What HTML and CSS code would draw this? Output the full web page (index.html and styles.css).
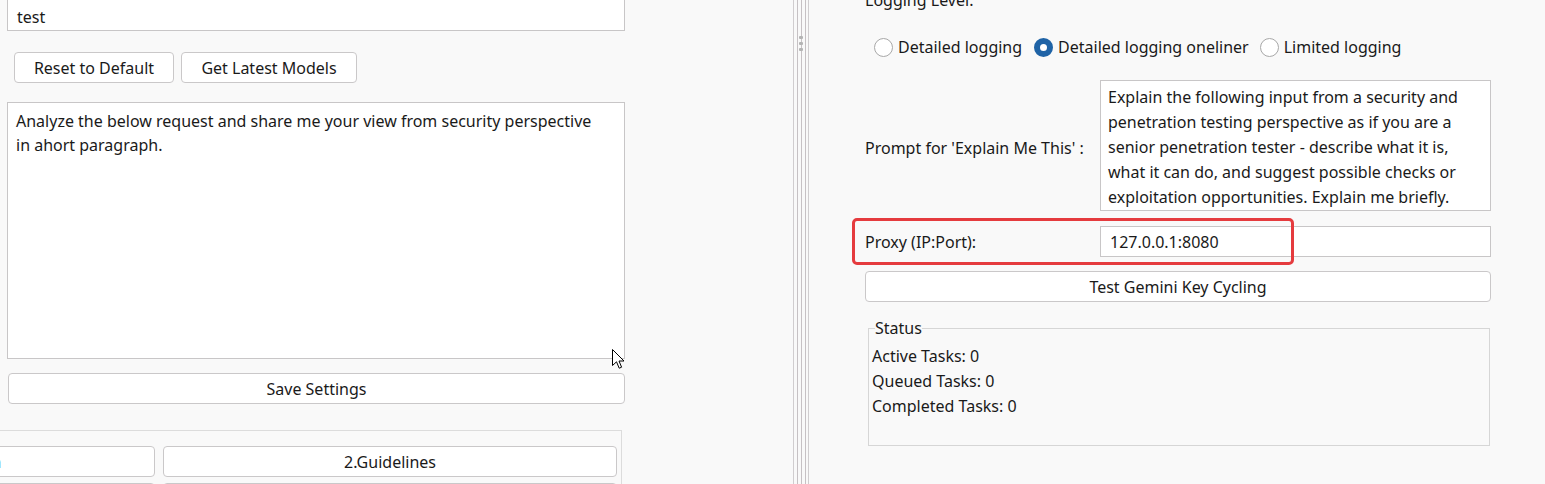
FILE: index.html
```html
<!DOCTYPE html>
<html>
<head>
<meta charset="utf-8">
<link rel="stylesheet" href="styles.css">
</head>
<body>
<div class="app">
  <div class="left">
    <div class="col">
      <div class="field field-top">test</div>
      <div class="btn-row">
        <div class="btn btn-reset">Reset to Default</div>
        <div class="btn btn-models">Get Latest Models</div>
      </div>
      <div class="field area-left">Analyze the below request and share me your view from security perspective<br>in ahort paragraph.</div>
      <div class="btn btn-save">Save Settings</div>
      <div class="group">
        <div class="btn btn-tab btn-active">1.API Configuration</div>
        <div class="btn btn-tab">2.Guidelines</div>
        <div class="btn btn-tab"></div>
        <div class="btn btn-tab"></div>
      </div>
    </div>
    <svg class="cursor" width="13" height="21" viewBox="0 0 13 21"><path d="M0.5 0.5 L0.5 16.5 L4.5 12.8 L7.2 19.2 L9.6 18.2 L7 12 L12 12 Z" fill="#fff" stroke="#000" stroke-width="1"/></svg>
  </div>
  <div class="splitter">
    <span class="sl"></span><span class="sl mid"></span><span class="sl mid"></span><span class="sl mid"></span><span class="sl"></span>
    <div class="grip"><i></i><i></i><i></i></div>
  </div>
  <div class="right">
    <div class="lbl-log">Logging Level:</div>
    <div class="radios">
      <div class="radio"><span class="dot"></span><span>Detailed logging</span></div>
      <div class="radio r2"><span class="dot on"></span><span>Detailed logging oneliner</span></div>
      <div class="radio"><span class="dot"></span><span>Limited logging</span></div>
    </div>
    <div class="form-row row-prompt">
      <div class="lbl lbl-prompt">Prompt for 'Explain Me This' :</div>
      <div class="field area-prompt">Explain the following input from a security and<br>penetration testing perspective as if you are a<br>senior penetration tester - describe what it is,<br>what it can do, and suggest possible checks or<br>exploitation opportunities. Explain me briefly.</div>
    </div>
    <div class="form-row row-proxy">
      <div class="lbl">Proxy (IP:Port):</div>
      <div class="field input-proxy">127.0.0.1:8080</div>
      <div class="hl"></div>
    </div>
    <div class="btn btn-test">Test Gemini Key Cycling</div>
    <fieldset class="status">
      <legend>Status</legend>
      <div class="st-line">Active Tasks: 0</div>
      <div class="st-line">Queued Tasks: 0</div>
      <div class="st-line">Completed Tasks: 0</div>
    </fieldset>
  </div>
</div>
</body>
</html>
```
FILE: styles.css
```css
* { box-sizing: border-box; }
html, body { margin: 0; padding: 0; }
body {
  width: 1545px;
  height: 484px;
  overflow: hidden;
  background: #f9f9f9;
  font-family: "Noto Sans", sans-serif;
  font-size: 16px;
  line-height: 22px;
  color: #1a1a1a;
}
.app { display: flex; height: 484px; }

/* left pane */
.left {
  width: 793px;
  flex: none;
  overflow: hidden;
  position: relative;
  padding-left: 7px;
}
.col { width: 618px; display: flex; flex-direction: column; }
.field { background: #fff; border: 1px solid #c8c6c7; }
.field-top { margin-top: -3px; height: 34px; padding: 8px 9px 0; }
.btn {
  height: 31px;
  border: 1px solid #cac8c9;
  border-radius: 4px;
  background: #fff;
  display: flex;
  align-items: center;
  justify-content: center;
  white-space: nowrap;
  flex: none;
}
.btn-row { margin-top: 21px; display: flex; gap: 7px; padding-left: 7px; }
.btn-reset { width: 160px; }
.btn-models { width: 176px; }
.area-left { margin-top: 19px; height: 257px; padding: 6px 8px 0; line-height: 24px; }
.btn-save { margin-top: 14px; margin-left: 1px; }
.group {
  margin-top: 26px;
  margin-left: -311px;
  width: 926px;
  height: 90px;
  border: 1px solid #dcdcdc;
  padding: 15px 4px 0 4px;
  display: grid;
  grid-template-columns: 454px 454px;
  grid-auto-rows: 31px;
  column-gap: 8px;
  row-gap: 6px;
}
.btn-active { color: #2a7bd0; }
.cursor { position: absolute; left: 612px; top: 349px; }

/* splitter */
.splitter {
  width: 16px;
  flex: none;
  display: flex;
  position: relative;
}
.sl { width: 1px; background: #d0cdcf; margin-right: 3px; }
.sl.mid { background: #c6c1c4; }
.sl:nth-child(4) { margin-right: 2px; }
.sl:nth-child(5) { margin-right: 0; }
.grip {
  position: absolute;
  left: 6px;
  top: 36px;
  display: flex;
  flex-direction: column;
  gap: 3px;
}
.grip i { display: block; width: 4px; height: 3px; border-radius: 1px; background: #b4b4b4; }

/* right pane */
.right {
  flex: 1;
  padding: 0 54px 0 56px;
  display: flex;
  flex-direction: column;
}
.lbl-log { margin-top: -11px; }
.radios { margin-top: 25px; height: 22px; display: flex; align-items: center; padding-left: 9px; }
.radio { display: flex; align-items: center; gap: 5px; margin-right: 12px; }
.radio.r2 { margin-right: 11px; }
.dot {
  width: 19px;
  height: 19px;
  border-radius: 50%;
  border: 1px solid #a8a8a8;
  background: #fff;
}
.dot.on { border: 6px solid #1f63a6; }
.form-row {
  display: grid;
  grid-template-columns: 235px 391px;
  align-items: center;
}
.row-prompt { margin-top: 22px; }
.lbl-prompt { margin-top: 5px; }
.area-prompt { height: 131px; padding: 4px 7px 0; line-height: 25px; }
.row-proxy { margin-top: 15px; position: relative; }
.input-proxy { height: 31px; padding-left: 9px; display: flex; align-items: center; }
.hl {
  position: absolute;
  left: -13px;
  top: -8px;
  width: 442px;
  height: 47px;
  border: 3px solid #e53b3e;
  border-radius: 5px;
}
.btn-test { margin-top: 14px; }
.status {
  margin: 15px 1px 0 3px;
  height: 129px;
  border: 1px solid #d6d6d6;
  padding: 5px 0 0 3px;
  min-width: 0;
}
.status legend { padding: 0; margin-left: 3px; line-height: 22px; }
.st-line { line-height: 25px; }
```
